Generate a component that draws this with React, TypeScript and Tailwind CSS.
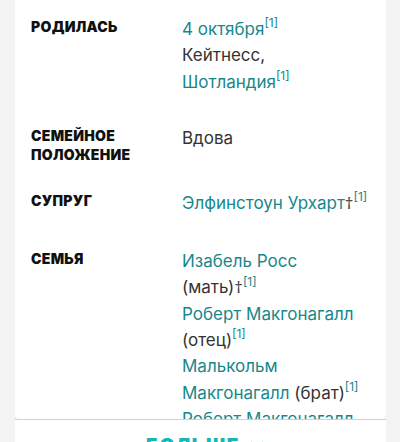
import React from "react";

const Sup = () => (
  <sup className="text-[12px] text-[#17878b] relative top-[-1px] align-super leading-none">[1]</sup>
);

const L = ({ children }: { children: React.ReactNode }) => (
  <span className="text-[#17878b]">{children}</span>
);

const D = () => <span style={{ fontFamily: "'Noto Sans', sans-serif" }} className="text-[#444]">†</span>;

const Row = ({ label, children }: { label: React.ReactNode; children: React.ReactNode }) => (
  <div className="grid grid-cols-[151px_1fr]">
    <div className="text-[14px] leading-[19px] pt-[1px] font-black text-[#111] uppercase tracking-[0.3px]">
      {label}
    </div>
    <div className="text-[17px] leading-[26.3px] text-[#333] whitespace-nowrap">{children}</div>
  </div>
);

export default function App() {
  return (
    <div
      className="w-[400px] h-[442px] overflow-hidden bg-[#f3f3f3] pl-[15px] pr-[14px]"
      style={{ fontFamily: "Inter, 'Noto Sans', sans-serif" }}
    >
      <div className="bg-white h-[419px] rounded-b-[5px] overflow-hidden pt-[16px] pl-[16px] pr-[15px] flex flex-col">
        <Row label="Родилась">
          <L>4 октября</L>
          <Sup />
          <br />
          Кейтнесс,
          <br />
          <L>Шотландия</L>
          <Sup />
        </Row>
        <div className="h-[30px] shrink-0" />
        <Row
          label={
            <>
              Семейное
              <br />
              положение
            </>
          }
        >
          Вдова
        </Row>
        <div className="h-[26px] shrink-0" />
        <Row label="Супруг">
          <L>Элфинстоун Урхарт</L>
          <D />
          <Sup />
        </Row>
        <div className="h-[32px] shrink-0" />
        <Row label="Семья">
          <L>Изабель Росс</L>
          <br />
          (мать)
          <D />
          <Sup />
          <br />
          <L>Роберт Макгонагалл</L>
          <br />
          (отец)<Sup />
          <br />
          <L>Малькольм</L>
          <br />
          <L>Макгонагалл</L> (брат)<Sup />
          <br />
          <L>Роберт Макгонагалл</L>
          <br />
          (брат)<Sup />
        </Row>
      </div>
      <div className="bg-white border-t border-[#c8d5d5] h-[40px] flex justify-center pt-[12px] pl-[10px]">
        <span className="text-[19px] font-black text-[#17b5b8] tracking-[1.5px] flex items-center gap-[9px] leading-[24px]">
          БОЛЬШЕ
          <svg width="16" height="10" viewBox="0 0 16 10" fill="none" stroke="#17b5b8" strokeWidth="2.5">
            <path d="M1.5 1.5 L8 8 L14.5 1.5" />
          </svg>
        </span>
      </div>
    </div>
  );
}
